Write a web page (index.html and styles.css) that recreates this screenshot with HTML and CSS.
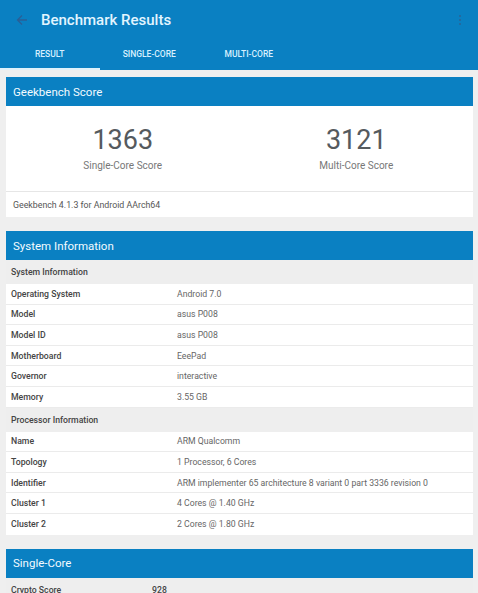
FILE: index.html
```html
<!DOCTYPE html>
<html>
<head>
<meta charset="utf-8">
<link rel="stylesheet" href="styles.css">
</head>
<body>
<div class="appbar">
  <div class="toolbar">
    <svg class="back" width="12" height="12" viewBox="0 0 12 12"><path d="M11 6H2M6 1.5L1.5 6L6 10.5" fill="none" stroke="#2b5f96" stroke-width="1.3"/></svg>
    <div class="title">Benchmark Results</div>
    <div class="dots"><span></span><span></span><span></span></div>
  </div>
  <div class="tabs">
    <div class="tab active">RESULT</div>
    <div class="tab">SINGLE-CORE</div>
    <div class="tab">MULTI-CORE</div>
  </div>
</div>
<div class="page">
  <div class="card">
    <div class="card-head">Geekbench Score</div>
    <div class="scores">
      <div class="score"><div class="num">1363</div><div class="lbl">Single-Core Score</div></div>
      <div class="score"><div class="num">3121</div><div class="lbl">Multi-Core Score</div></div>
    </div>
    <div class="foot">Geekbench 4.1.3 for Android AArch64</div>
  </div>
  <div class="card">
    <div class="card-head">System Information</div>
    <div class="row sub"><div class="k">System Information</div></div>
    <div class="row"><div class="k">Operating System</div><div class="v">Android 7.0</div></div>
    <div class="row"><div class="k">Model</div><div class="v">asus P008</div></div>
    <div class="row"><div class="k">Model ID</div><div class="v">asus P008</div></div>
    <div class="row"><div class="k">Motherboard</div><div class="v">EeePad</div></div>
    <div class="row"><div class="k">Governor</div><div class="v">interactive</div></div>
    <div class="row"><div class="k">Memory</div><div class="v">3.55 GB</div></div>
    <div class="row sub"><div class="k">Processor Information</div></div>
    <div class="row"><div class="k">Name</div><div class="v">ARM Qualcomm</div></div>
    <div class="row"><div class="k">Topology</div><div class="v">1 Processor, 6 Cores</div></div>
    <div class="row"><div class="k">Identifier</div><div class="v">ARM implementer 65 architecture 8 variant 0 part 3336 revision 0</div></div>
    <div class="row"><div class="k">Cluster 1</div><div class="v">4 Cores @ 1.40 GHz</div></div>
    <div class="row last"><div class="k">Cluster 2</div><div class="v">2 Cores @ 1.80 GHz</div></div>
  </div>
  <div class="card">
    <div class="card-head">Single-Core</div>
    <div class="row sub score-row"><div class="k">Crypto Score</div><div class="v">928</div></div>
  </div>
</div>
</body>
</html>
```
FILE: styles.css
```css
* { box-sizing: border-box; }
html, body { margin: 0; padding: 0; }
body {
  background: #efefef;
  font-family: Roboto, "Noto Sans", sans-serif;
  width: 478px;
  height: 593px;
  overflow: hidden;
}
.appbar { background: #0a80c2; height: 70px; }
.toolbar {
  height: 40px;
  display: flex;
  align-items: center;
  padding-left: 16px;
  padding-right: 16px;
}
.back { margin-right: 13px; }
.title {
  color: #e2f5ff;
  font-size: 15px;
  font-weight: 500;
  flex: 1;
}
.dots { display: flex; flex-direction: column; gap: 1.6px; margin-right: 1px; }
.dots span { width: 2px; height: 2px; background: #2a6396; border-radius: 1px; }
.tabs { display: flex; height: 30px; }
.tab {
  width: 99.5px;
  display: flex;
  align-items: center;
  justify-content: center;
  color: #d8f0ff;
  font-size: 8.5px;
  font-weight: 500;
  padding-bottom: 1px;
  border-bottom: 2px solid transparent;
}
.tab.active { border-bottom-color: #dff2fb; }
.page { padding: 7px 5px 0 6px; display: flex; flex-direction: column; gap: 14px; }
.card { background: #fff; }
.card-head {
  background: #0a80c2;
  color: #f3fbff;
  font-size: 11.5px;
  height: 29px;
  display: flex;
  align-items: center;
  padding-left: 7px;
}
.scores { display: flex; height: 86px; border-bottom: 1px solid #e6e6e6; }
.score {
  flex: 1;
  display: flex;
  flex-direction: column;
  align-items: center;
  padding-top: 18px;
}
.num { font-size: 27px; color: #555a5e; line-height: 32px; }
.lbl { font-size: 10px; color: #777; margin-top: 4px; }
.foot {
  height: 25px;
  display: flex;
  align-items: center;
  padding-left: 7px;
  font-size: 8.8px;
  color: #555;
}
.row {
  display: flex;
  align-items: center;
  height: 20.6px;
  border-bottom: 1px solid #ebebeb;
  font-size: 8.7px;
}
.row.last { border-bottom: none; }
.row.sub { background: #eeeeee; height: 24px; border-bottom: none; }
.k { width: 171px; padding-left: 5px; color: #444; font-weight: 500; }
.v { color: #666; }
.score-row .k { width: 146px; }
.score-row .v { color: #444; font-weight: 500; }
```
